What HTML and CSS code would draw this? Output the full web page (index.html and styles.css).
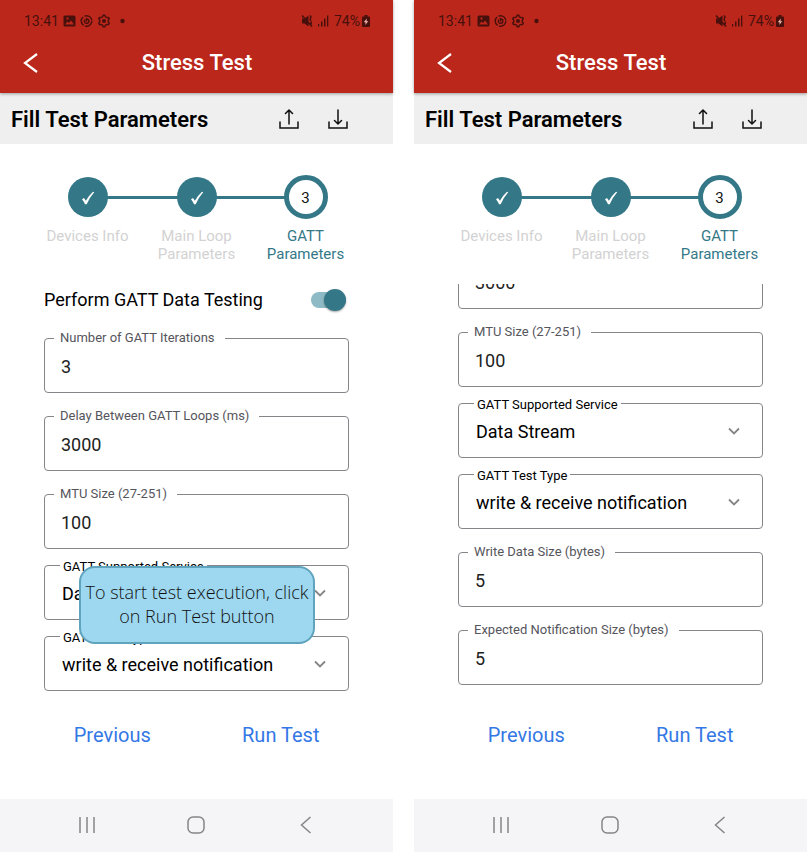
FILE: index.html
```
<!DOCTYPE html>
<html lang="en">
<head>
<meta charset="utf-8">
<meta name="viewport" content="width=device-width, initial-scale=1">
<title>Stress Test</title>
<link rel="stylesheet" href="styles.css">
</head>
<body>
<svg class="sprite" aria-hidden="true">
  <symbol id="i-status" viewBox="0 0 64 14">
    <path fill="currentColor" fill-rule="evenodd" d="M2 1.500h9a1.500 1.500 0 0 1 1.500 1.500v8a1.500 1.500 0 0 1-1.500 1.500H2A1.500 1.500 0 0 1 .5 11V3A1.500 1.500 0 0 1 2 1.500zM2 10.500h9L8 6.500l-2 2.500-1.500-1.500zM3.500 3.500v2h2v-2z"/>
    <g fill="none" stroke="currentColor" stroke-width="1.400">
      <circle cx="23.500" cy="7" r="5.300" stroke-dasharray="9.600 1.500"/>
      <path d="M21.500 5.500v2.200a2.200 2.200 0 1 0 2.200-2.700M23.500 4v3.500"/>
      <path d="M40.200 1.300h1.600l.6 1.500 1.500.8 1.600-.2.800 1.400-1 1.300v1.800l1 1.300-.8 1.400-1.600-.2-1.500.8-.6 1.500h-1.600l-.6-1.500-1.500-.8-1.600.2-.8-1.400 1-1.300V6.100l-1-1.300.8-1.400 1.600.2 1.500-.8z"/>
    </g>
    <circle cx="41" cy="7" r="2" fill="currentColor"/>
    <circle cx="59.500" cy="7" r="2.200" fill="currentColor"/>
  </symbol>
  <symbol id="i-signal" viewBox="0 0 32 14">
    <path fill="currentColor" d="M1 4.500h2.500L7.500 1.500v11L3.500 9.500H1z"/>
    <path fill="none" stroke="currentColor" stroke-width="1.500" d="M1 1.500l10 11M9 1.500q1.500 1 .5 2.500t.5 3M10.500 7.500q-1 1.500 0 3"/>
    <path fill="currentColor" d="M17 10h1.200v2.500H17zM20 7.500h1.500v5H20zM23 4.500h1.500v8H23zM26 1.500h1.300v11H26z"/>
  </symbol>
  <symbol id="i-battery" viewBox="0 0 8 12">
    <path fill="currentColor" fill-rule="evenodd" d="M2.500 0h3v1.500H7q1 0 1 1V11q0 1-1 1H1q-1 0-1-1V2.500q0-1 1-1h1.500z"/>
    <path fill="#f0b8ae" d="M4.800 3.500L1.800 7.200h1.900L3.200 10 6.300 6.200H4.500z"/>
  </symbol>
  <symbol id="i-back" viewBox="0 0 16 22">
    <path fill="none" stroke="currentColor" stroke-width="2.200" d="M14 2L2 11l12 9"/>
  </symbol>
  <symbol id="i-upload" viewBox="0 0 20 20">
    <path fill="none" stroke="currentColor" stroke-width="1.500" stroke-linecap="round" d="M1 13v6h18v-6M10 15V1M6.500 4.500L10 1l3.500 3.500"/>
  </symbol>
  <symbol id="i-download" viewBox="0 0 20 20">
    <path fill="none" stroke="currentColor" stroke-width="1.500" stroke-linecap="round" d="M1 13v6h18v-6M10 1v14M6.500 11.500L10 15l3.500-3.500"/>
  </symbol>
  <symbol id="i-check" viewBox="0 0 14 14">
    <path fill="currentColor" d="M1 8.300l2-1.200L4.900 9.700Q7.500 5 12 .8l1.200.4Q8.500 6.500 5.700 13.300H4Q3 10.800 1 8.300z"/>
  </symbol>
  <symbol id="i-chevron" viewBox="0 0 12 8">
    <path fill="none" stroke="currentColor" stroke-width="1.800" d="M1 1.500l5 5 5-5"/>
  </symbol>
  <symbol id="i-recents" viewBox="0 0 18 18">
    <path fill="none" stroke="currentColor" stroke-width="1.500" d="M2 1v16M9 1v16M16 1v16"/>
  </symbol>
  <symbol id="i-home" viewBox="0 0 18 18">
    <rect x="1" y="1" width="16" height="16" rx="5" fill="none" stroke="currentColor" stroke-width="1.500"/>
  </symbol>
  <symbol id="i-navback" viewBox="0 0 12 18">
    <path fill="none" stroke="currentColor" stroke-width="1.500" d="M10.500 1l-9 8 9 8"/>
  </symbol>
</svg>

<main class="screens">
  <section class="phone">
    <header class="top">
      <div class="status">
        <span>13:41</span><svg class="status-icons"><use href="#i-status"/></svg>
        <svg class="signal"><use href="#i-signal"/></svg><span>74%</span><svg class="battery"><use href="#i-battery"/></svg>
      </div>
      <div class="titlebar">
        <button class="icon-btn" aria-label="Back"><svg class="back"><use href="#i-back"/></svg></button>
        <h1>Stress Test</h1>
      </div>
    </header>
    <div class="subhead">
      <h2>Fill Test Parameters</h2>
      <button class="icon-btn" aria-label="Export"><svg class="action"><use href="#i-upload"/></svg></button>
      <button class="icon-btn" aria-label="Import"><svg class="action"><use href="#i-download"/></svg></button>
    </div>
    <ol class="steps">
      <li class="step done"><span class="dot"><svg class="check"><use href="#i-check"/></svg></span><span>Devices Info</span></li>
      <li class="step done"><span class="dot"><svg class="check"><use href="#i-check"/></svg></span><span>Main Loop Parameters</span></li>
      <li class="step current"><span class="dot">3</span><span>GATT Parameters</span></li>
    </ol>
    <form class="form">
      <div class="toggle-row">
        <label for="perform">Perform GATT Data Testing</label>
        <input class="switch" type="checkbox" id="perform" checked>
      </div>
      <fieldset class="field"><legend><label for="iter">Number of GATT Iterations</label></legend><input id="iter" type="text" value="3"></fieldset>
      <fieldset class="field"><legend><label for="delay">Delay Between GATT Loops (ms)</label></legend><input id="delay" type="text" value="3000"></fieldset>
      <fieldset class="field"><legend><label for="mtu">MTU Size (27-251)</label></legend><input id="mtu" type="text" value="100"></fieldset>
      <fieldset class="field choice"><legend><label for="service">GATT Supported Service</label></legend><select id="service"><option>Data Stream</option></select><svg class="chevron"><use href="#i-chevron"/></svg></fieldset>
      <fieldset class="field choice"><legend><label for="type">GATT Test Type</label></legend><select id="type"><option>write &amp; receive notification</option></select><svg class="chevron"><use href="#i-chevron"/></svg></fieldset>
      <p class="hint" role="tooltip">To start test execution, click on Run Test button</p>
    </form>
    <div class="actions"><button>Previous</button><button>Run Test</button></div>
    <nav class="navbar">
      <button class="icon-btn" aria-label="Recent apps"><svg class="nav"><use href="#i-recents"/></svg></button>
      <button class="icon-btn" aria-label="Home"><svg class="nav"><use href="#i-home"/></svg></button>
      <button class="icon-btn" aria-label="Go back"><svg class="nav nav-back"><use href="#i-navback"/></svg></button>
    </nav>
  </section>

  <section class="phone">
    <header class="top">
      <div class="status">
        <span>13:41</span><svg class="status-icons"><use href="#i-status"/></svg>
        <svg class="signal"><use href="#i-signal"/></svg><span>74%</span><svg class="battery"><use href="#i-battery"/></svg>
      </div>
      <div class="titlebar">
        <button class="icon-btn" aria-label="Back"><svg class="back"><use href="#i-back"/></svg></button>
        <h1>Stress Test</h1>
      </div>
    </header>
    <div class="subhead">
      <h2>Fill Test Parameters</h2>
      <button class="icon-btn" aria-label="Export"><svg class="action"><use href="#i-upload"/></svg></button>
      <button class="icon-btn" aria-label="Import"><svg class="action"><use href="#i-download"/></svg></button>
    </div>
    <ol class="steps">
      <li class="step done"><span class="dot"><svg class="check"><use href="#i-check"/></svg></span><span>Devices Info</span></li>
      <li class="step done"><span class="dot"><svg class="check"><use href="#i-check"/></svg></span><span>Main Loop Parameters</span></li>
      <li class="step current"><span class="dot">3</span><span>GATT Parameters</span></li>
    </ol>
    <form class="form scrolled">
      <fieldset class="field"><legend><label for="delay2">Delay Between GATT Loops (ms)</label></legend><input id="delay2" type="text" value="3000"></fieldset>
      <fieldset class="field"><legend><label for="mtu2">MTU Size (27-251)</label></legend><input id="mtu2" type="text" value="100"></fieldset>
      <fieldset class="field choice"><legend><label for="service2">GATT Supported Service</label></legend><select id="service2"><option>Data Stream</option></select><svg class="chevron"><use href="#i-chevron"/></svg></fieldset>
      <fieldset class="field choice"><legend><label for="type2">GATT Test Type</label></legend><select id="type2"><option>write &amp; receive notification</option></select><svg class="chevron"><use href="#i-chevron"/></svg></fieldset>
      <fieldset class="field"><legend><label for="write2">Write Data Size (bytes)</label></legend><input id="write2" type="text" value="5"></fieldset>
      <fieldset class="field"><legend><label for="expect2">Expected Notification Size (bytes)</label></legend><input id="expect2" type="text" value="5"></fieldset>
    </form>
    <div class="actions"><button>Previous</button><button>Run Test</button></div>
    <nav class="navbar">
      <button class="icon-btn" aria-label="Recent apps"><svg class="nav"><use href="#i-recents"/></svg></button>
      <button class="icon-btn" aria-label="Home"><svg class="nav"><use href="#i-home"/></svg></button>
      <button class="icon-btn" aria-label="Go back"><svg class="nav nav-back"><use href="#i-navback"/></svg></button>
    </nav>
  </section>
</main>
</body>
</html>
```
FILE: styles.css
```
:root {
  --red: #bb271b;
  --teal: #347888;
  --line: #85858a;
}

* { box-sizing: border-box; }

body {
  margin: 0;
  background: #fff;
  color: #111;
  font-family: Roboto, "Liberation Sans", sans-serif;
  font-size: 17px;
}

button, input, select { font: inherit; color: inherit; }

.sprite { position: absolute; width: 0; height: 0; }

.screens {
  display: grid;
  grid-template-columns: 1fr 1fr;
  grid-template-rows: 100%;
  gap: 21px;
  height: 100vh;
}

.phone {
  display: flex;
  flex-direction: column;
  min-width: 0;
  min-height: 0;
}

.icon-btn {
  display: flex;
  padding: 0;
  border: 0;
  background: none;
}

/* Header */
.top {
  position: relative;
  background: var(--red);
  color: #fff;
  box-shadow: 0 1px 3px rgba(0, 0, 0, .35);
}

.status {
  display: flex;
  align-items: center;
  height: 41px;
  padding: 0 23px 0 24px;
  color: #48100c;
  font-size: 14px;
}

.status-icons { width: 64px; height: 14px; margin: 0 auto 0 4px; }
.signal { width: 32px; height: 14px; margin-right: 1px; }
.battery { width: 8px; height: 12px; margin-left: 2px; }

.titlebar {
  display: grid;
  grid-template-columns: 40px 1fr 40px;
  align-items: center;
  height: 52px;
  padding: 0 22px 8px 23px;
}

.back { width: 16px; height: 22px; }

h1 {
  margin: 0;
  font-size: 22px;
  font-weight: 500;
  line-height: 28px;
  text-align: center;
}

.subhead {
  display: flex;
  align-items: center;
  gap: 29px;
  height: 51px;
  padding: 1px 45px 0 11px;
  background: #efefef;
}

h2 {
  flex: 1;
  margin: 0;
  color: #000;
  font-size: 22px;
  font-weight: 600;
}

.action { width: 20px; height: 20px; color: #111; }

/* Stepper */
.steps {
  display: grid;
  grid-template-columns: repeat(3, 1fr);
  margin: 0;
  padding: 31px 33px 21px;
  list-style: none;
}

.step {
  display: flex;
  flex-direction: column;
  align-items: center;
  color: #d2d2d2;
  font-size: 15px;
  line-height: 18px;
  text-align: center;
  position: relative;
}

.step + .step::before {
  content: "";
  position: absolute;
  top: 21px;
  left: -50%;
  width: 100%;
  height: 3px;
  background: var(--teal);
}

.dot {
  position: relative;
  z-index: 1;
  display: grid;
  place-items: center;
  width: 40px;
  height: 40px;
  margin: 2px 0 10px;
  padding-top: 2px;
  border-radius: 50%;
  background: var(--teal);
  color: #fff;
}

.check { width: 14px; height: 14px; }

.current { color: var(--teal); }

.current .dot {
  width: 44px;
  height: 44px;
  margin: 0 0 8px;
  border: 5px solid var(--teal);
  background: #fff;
  color: #111;
}

/* Form */
.form {
  position: relative;
  flex: 1;
  display: flex;
  flex-direction: column;
  min-height: 0;
  padding: 0 44px;
  overflow: hidden;
}

.scrolled { justify-content: flex-end; padding-bottom: 14px; }

.toggle-row {
  flex: none;
  display: flex;
  align-items: center;
  justify-content: space-between;
  height: 31px;
  padding-right: 3px;
  font-size: 18px;
  color: #000;
}

.switch {
  appearance: none;
  display: flex;
  align-items: center;
  justify-content: flex-end;
  width: 35px;
  height: 16px;
  margin: 0;
  border-radius: 8px;
  background: #8dbac4;
}

.switch::before {
  content: "";
  width: 22px;
  height: 22px;
  border-radius: 50%;
  background: var(--teal);
  box-shadow: 0 1px 2px rgba(0, 0, 0, .35);
}

.field {
  flex: none;
  display: flex;
  align-items: center;
  position: relative;
  min-width: 0;
  margin: 15px 0 0;
  padding: 0 9px;
  border: 1px solid var(--line);
  border-radius: 4px;
}

.field legend {
  padding: 0 10px 0 6px;
  color: #55555c;
  font-size: 13px;
  line-height: 16px;
}

.field legend label { display: block; }

.field input,
.field select {
  appearance: none;
  width: 100%;
  min-width: 0;
  height: 46px;
  margin: 0;
  padding: 0 7px 5px;
  border: 0;
  outline: 0;
  background: none;
  color: #222;
  font-size: 18px;
}

.field.choice { margin-top: 6px; }

.choice legend {
  margin-left: 6px;
  padding: 4px 3px 0;
  color: #000;
}

.field.choice select { height: 44px; padding: 0 8px 8px; color: #000; }

.chevron {
  position: absolute;
  right: 22px;
  bottom: 22px;
  width: 12px;
  height: 8px;
  color: #858585;
  pointer-events: none;
}

.hint {
  position: absolute;
  right: 78px;
  bottom: 55px;
  left: 79px;
  margin: 0;
  padding: 12px 4px 14px;
  border: 2px solid #5fa3bc;
  border-radius: 16px;
  background: #9ed8f0;
  color: #111;
  font-family: "Open Sans", "Noto Sans", sans-serif;
  font-size: 18px;
  font-weight: 300;
  line-height: 24px;
  text-align: center;
}

.actions {
  display: grid;
  grid-template-columns: 1fr 1fr;
  height: 100px;
  padding: 21px 28px 0;
  align-items: start;
}

.actions button {
  padding: 0;
  border: 0;
  background: none;
  color: #3478e5;
  font-size: 20px;
  line-height: 30px;
}

.navbar {
  display: grid;
  grid-template-columns: repeat(3, 1fr);
  place-items: center;
  height: 53px;
  padding: 0 32px 2px;
  background: #f5f5f7;
  color: #858587;
}

.nav { width: 18px; height: 18px; }
.nav-back { width: 12px; }
```
